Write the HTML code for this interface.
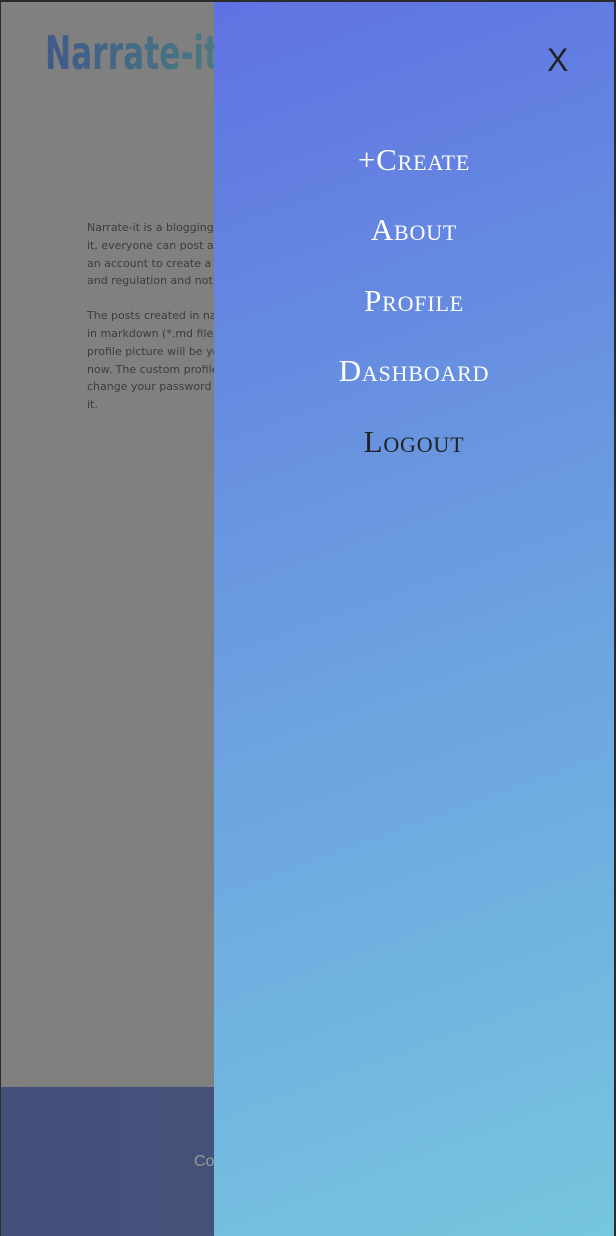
<!DOCTYPE html>
<html><head><style>
html,body{margin:0;padding:0}
body{width:616px;height:1236px;position:relative;overflow:hidden;background:#2b2b2b;font-family:"Liberation Sans",sans-serif}
.page{position:absolute;left:1px;top:2px;width:613px;height:1234px;background:#808080;overflow:hidden}
.logo{position:absolute;left:44px;top:24px;font-family:"DejaVu Sans",sans-serif;font-size:46px;font-weight:bold;letter-spacing:0px;transform:scaleX(0.68);transform-origin:left;background:linear-gradient(90deg,#3e5a8a,#4a7a80);-webkit-background-clip:text;color:transparent}
.txt{position:absolute;left:86px;top:217px;font-family:"DejaVu Sans",sans-serif;font-size:11px;line-height:17.8px;color:#3c3c3c;white-space:nowrap}
.txt p{margin:0 0 17px}
.footer{position:absolute;left:0;top:1085px;width:613px;height:151px;background:linear-gradient(90deg,#434f7a,#465878)}
.footer span{position:absolute;left:193px;top:66px;color:#999;font-size:16px}
.panel{position:absolute;left:214px;top:2px;width:400px;height:1234px;background:linear-gradient(160deg,#5f72e2 0%,#6a9be0 45%,#76c6df 100%)}
.x{position:absolute;left:333px;top:40px;font-size:32px;color:#222}
.menu{position:absolute;left:0;width:400px;text-align:center;font-family:"Liberation Serif",serif;font-variant:small-caps;font-size:31px;color:#fff;letter-spacing:0.8px}
</style></head><body>
<div class="page">
<div class="logo">Narrate-it</div>
<div class="txt"><p>Narrate-it is a blogging platform<br>it, everyone can post a blog about<br>an account to create a blog and<br>and regulation and not be harmful.</p><p>The posts created in narrate-it are<br>in markdown (*.md files) you can<br>profile picture will be your default<br>now. The custom profile picture<br>change your password or account<br>it.</p></div>
<div class="footer"><span>Copyright</span></div>
</div>
<div class="panel">
<div class="x">X</div>
<div class="menu" style="top:140px">+Create</div>
<div class="menu" style="top:210px">About</div>
<div class="menu" style="top:281px">Profile</div>
<div class="menu" style="top:351px">Dashboard</div>
<div class="menu" style="top:422px;color:#222">Logout</div>
</div>
</body></html>
